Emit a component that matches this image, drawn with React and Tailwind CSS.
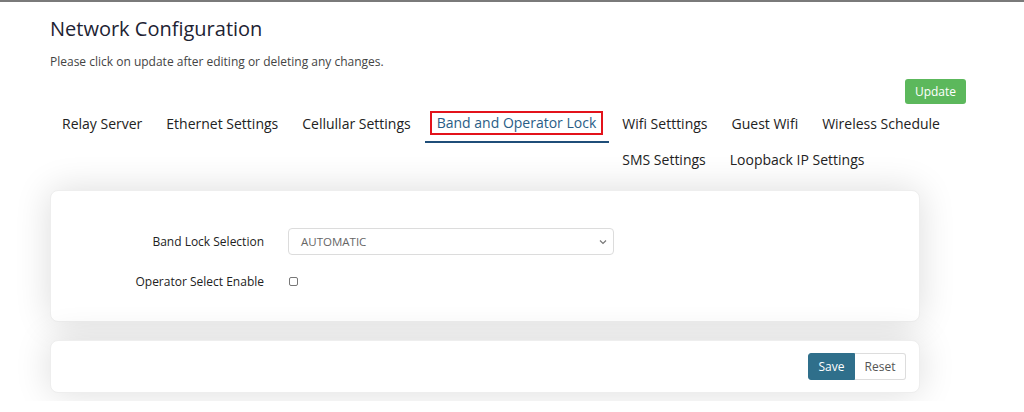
import React, { useState } from 'react';

const firstTabs = ['Relay Server', 'Ethernet Settings', 'Cellullar Settings'];
const restTabs = ['Wifi Setttings', 'Guest Wifi', 'Wireless Schedule', 'SMS Settings', 'Loopback IP Settings'];

function Tab({ label }) {
  return (
    <div className="px-[12px] py-[9px] text-[14px] leading-[18px] text-[#222] whitespace-nowrap cursor-pointer">
      {label}
    </div>
  );
}

function App() {
  const [operatorEnabled, setOperatorEnabled] = useState(false);

  return (
    <div
      className="h-[401px] overflow-hidden bg-white border-t-2 border-[#7a7a7a]"
      style={{ fontFamily: '"Open Sans", "Liberation Sans", sans-serif' }}
    >
      <div className="pl-[50px] pr-[50px] pt-[14px]">
        <h1 className="text-[20px] leading-[26px] text-[#1d2333] font-normal">Network Configuration</h1>
        <p className="mt-[12px] text-[12px] leading-[16px] text-[#444]">
          Please click on update after editing or deleting any changes.
        </p>
        <div className="flex justify-end mt-[9px] mb-[2px] pr-[8px]">
          <button className="w-[61px] h-[25px] rounded-[3px] bg-[#5cb85c] text-white text-[12px]">Update</button>
        </div>

        {/* tabs */}
        <div className="flex items-start">
          {firstTabs.map((t) => (
            <Tab key={t} label={t} />
          ))}
          <div className="pl-[5px] pr-[6px] pt-[5px] pb-[6px] border-b-2 border-[#1f4e79] ml-[2px]">
            <span className="block border-2 border-[#e3131b] px-[5px] py-[1px] text-[14px] leading-[18px] text-[#2a5d86] whitespace-nowrap">
              Band and Operator Lock
            </span>
          </div>
          <div className="flex flex-wrap flex-1 min-w-0 ml-[1px]">
            {restTabs.map((t) => (
              <Tab key={t} label={t} />
            ))}
          </div>
        </div>
      </div>

      <div className="pl-[50px] pr-[104px] mt-[12px]">
        <div className="bg-white rounded-[8px] border border-[#eeeeee] shadow-[0_0_36px_rgba(0,0,0,0.14)] pt-[37px] pb-[26px]">
          <div className="grid grid-cols-[213px_326px] gap-x-[24px] gap-y-[13px] items-center">
            <label className="text-right text-[12px] text-[#222]">Band Lock Selection</label>
            <div className="relative h-[27px] border border-[#dcdcdc] rounded-[4px] flex items-center pl-[12px] text-[11.5px] text-[#666]">
              AUTOMATIC
              <svg className="absolute right-[6px] top-[10px]" width="8" height="6" viewBox="0 0 8 6" fill="none">
                <path d="M1 1.5L4 4.5L7 1.5" stroke="#777" strokeWidth="1.2" />
              </svg>
            </div>
            <label className="text-right text-[12px] text-[#222] h-[27px] leading-[27px]">Operator Select Enable</label>
            <div className="h-[27px] flex items-center">
              <input
                type="checkbox"
                checked={operatorEnabled}
                onChange={(e) => setOperatorEnabled(e.target.checked)}
                className="w-[9px] h-[9px] ml-[1px] appearance-none border border-[#777] rounded-[2px] bg-white"
              />
            </div>
          </div>
        </div>

        <div className="mt-[18px] bg-white rounded-[8px] border border-[#eeeeee] shadow-[0_0_36px_rgba(0,0,0,0.14)] h-[53px] flex items-center justify-end pr-[13px]">
          <div className="flex">
            <button className="w-[47px] h-[27px] bg-[#2f6f8b] text-white text-[12px] rounded-l-[3px] border border-[#2f6f8b]">Save</button>
            <button className="w-[51px] h-[27px] bg-white text-[#555] text-[12px] rounded-r-[3px] border border-[#dddddd] border-l-0">Reset</button>
          </div>
        </div>
      </div>
    </div>
  );
}

export default App;
